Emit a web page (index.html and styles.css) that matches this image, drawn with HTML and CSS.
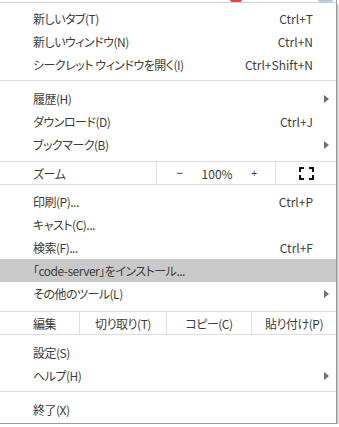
FILE: index.html
```html
<!DOCTYPE html>
<html lang="ja">
<head>
    <meta charset="UTF-8">
    <meta name="viewport" content="width=device-width, initial-scale=1.0">
    <title>Chrome メニュー</title>
    <link rel="stylesheet" href="styles.css">
</head>
<body>
    <div class="peek">
        <span class="peek-red"></span>
        <span class="peek-blue"></span>
    </div>

    <div class="menu">
        <div class="item"><span>新しいタブ(T)</span><span class="key">Ctrl+T</span></div>
        <div class="item"><span>新しいウィンドウ(N)</span><span class="key">Ctrl+N</span></div>
        <div class="item"><span>シークレット ウィンドウを開く(I)</span><span class="key">Ctrl+Shift+N</span></div>

        <div class="sep"></div>

        <div class="item"><span>履歴(H)</span><span class="arrow"></span></div>
        <div class="item"><span>ダウンロード(D)</span><span class="key">Ctrl+J</span></div>
        <div class="item"><span>ブックマーク(B)</span><span class="arrow"></span></div>

        <div class="split zoom-row">
            <div class="cell cell-label zoom-label">ズーム</div>
            <div class="cell zoom-controls">
                <span class="zoom-btn">−</span>
                <span>100%</span>
                <span class="zoom-btn zoom-plus">+</span>
            </div>
            <div class="cell cell-center cell-fill">
                <svg class="fullscreen" width="15" height="13" viewBox="0 0 15 13">
                    <path d="M1 5V1h4M10 1h4v4M14 8v4h-4M5 12H1V8" fill="none" stroke="#111" stroke-width="2"/>
                </svg>
            </div>
        </div>

        <div class="item"><span>印刷(P)...</span><span class="key">Ctrl+P</span></div>
        <div class="item"><span>キャスト(C)...</span></div>
        <div class="item"><span>検索(F)...</span><span class="key">Ctrl+F</span></div>
        <div class="item active"><span>「code-server」をインストール...</span></div>
        <div class="item"><span>その他のツール(L)</span><span class="arrow"></span></div>

        <div class="split edit-row">
            <div class="cell cell-label edit-label">編集</div>
            <div class="cell cell-center edit-cut">切り取り(T)</div>
            <div class="cell cell-center edit-copy">コピー(C)</div>
            <div class="cell cell-center cell-fill">貼り付け(P)</div>
        </div>

        <div class="item"><span>設定(S)</span></div>
        <div class="item"><span>ヘルプ(H)</span><span class="arrow"></span></div>

        <div class="sep"></div>

        <div class="item"><span>終了(X)</span></div>
    </div>
</body>
</html>
```

FILE: styles.css
```css
* {
    margin: 0;
    padding: 0;
    box-sizing: border-box;
}

body {
    background: #fff;
    font-family: "Noto Sans CJK JP", sans-serif;
    font-size: 12px;
    font-feature-settings: "palt";
    color: #3c3c3c;
}

.peek {
    display: flex;
    height: 3px;
    width: 337px;
    border-bottom: 1px solid #d8d8d8;
    border-right: 1px solid #9a9a9a;
}

.peek-red {
    width: 12px;
    height: 2px;
    margin-left: 230px;
    background: #e8453c;
    border-radius: 0 0 6px 6px;
}

.peek-blue {
    width: 15px;
    height: 2px;
    margin-left: 76px;
    background: #b8c6dc;
    border-radius: 0 0 7px 7px;
}

.menu {
    width: 337px;
    padding: 4px 0 2px;
    background: #fff;
    border-right: 1px solid #9a9a9a;
    border-bottom: 1px solid #9a9a9a;
    box-shadow: 1px 1px 2px rgba(0, 0, 0, 0.35);
}

.item {
    display: flex;
    align-items: center;
    height: 23px;
    padding: 0 7px 0 33px;
    white-space: nowrap;
    letter-spacing: -0.5px;
}

.item.active {
    background: #c9c9c9;
}

.key {
    margin-left: auto;
    margin-right: 16px;
    letter-spacing: 0;
}

.arrow {
    margin-left: auto;
    width: 0;
    height: 0;
    border-top: 4px solid transparent;
    border-bottom: 4px solid transparent;
    border-left: 5px solid #707070;
}

.sep {
    height: 1px;
    margin: 4px 0 6px;
    background: #dedede;
}

.split {
    display: flex;
    height: 24px;
    border-top: 1px solid #dedede;
    border-bottom: 1px solid #dedede;
}

.zoom-row {
    margin: 5px 0;
}

.edit-row {
    margin: 6px 0;
}

.cell {
    display: flex;
    align-items: center;
    flex: none;
    border-left: 1px solid #dedede;
    white-space: nowrap;
    letter-spacing: -0.5px;
}

.cell-label {
    border-left: none;
    padding-left: 33px;
}

.cell-center {
    justify-content: center;
}

.cell-fill {
    flex: 1;
}

.zoom-label {
    width: 156px;
}

.zoom-controls {
    width: 119px;
    justify-content: space-between;
    padding: 0 18px 0 19px;
    letter-spacing: 0;
}

.zoom-btn {
    font-family: "Liberation Sans", sans-serif;
}

.zoom-plus {
    font-size: 10px;
}

.fullscreen {
    display: block;
    margin-left: 1px;
}

.edit-label {
    width: 79px;
}

.edit-cut {
    width: 87px;
}

.edit-copy {
    width: 85px;
}
```
